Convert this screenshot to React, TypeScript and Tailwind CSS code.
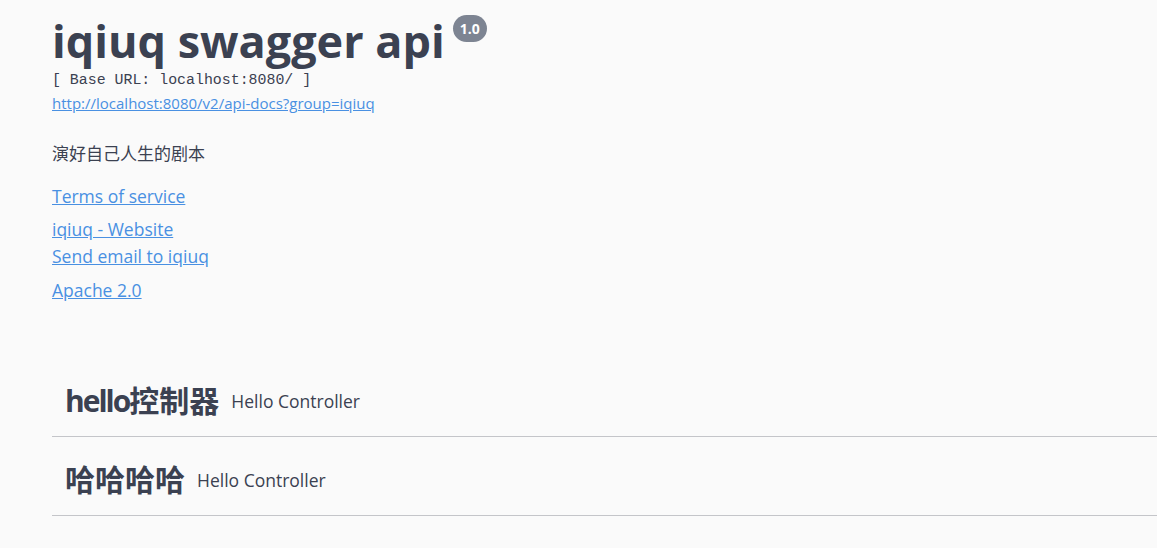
const sans = "font-['Open_Sans','Noto_Sans_CJK_SC',sans-serif]";

const links = [
  { label: "Terms of service", cls: "mt-[17px]" },
  { label: "iqiuq - Website", cls: "mt-[6px]" },
  { label: "Send email to iqiuq", cls: "mt-0" },
  { label: "Apache 2.0", cls: "mt-[7px]" },
];

const tags = [
  { latin: "hello", name: "控制器", desc: "Hello Controller" },
  { latin: "", name: "哈哈哈哈", desc: "Hello Controller" },
];

export default function App() {
  return (
    <div className={`min-h-[548px] w-full overflow-hidden bg-[#fafafa] pl-[52px] text-[#3b4151] ${sans}`}>
      <div className="pt-[10px]">
        <div className="flex items-start">
          <h2 className="text-[45px] font-bold leading-[61px] text-[#3b4151]">iqiuq swagger api</h2>
          <span className="ml-[8px] mt-[5px] rounded-full bg-[#7d8492] px-[7px] py-[4px] text-[14px] font-bold leading-[19px] text-white">
            1.0
          </span>
        </div>
        <div className="font-['Liberation_Mono',monospace] text-[14.9px] leading-[19px] text-[#3b4151]">
          [ Base URL: localhost:8080/ ]
        </div>
        <a className="mt-[3px] block text-[15px] leading-[21px] text-[#4990e2] underline" href="#">
          http://localhost:8080/v2/api-docs?group=iqiuq
        </a>
        <p className="mt-[28px] text-[17px] leading-[24px]">演好自己人生的剧本</p>
        <div className="flex flex-col items-start">
          {links.map((l) => (
            <a key={l.label} className={`${l.cls} text-[17.5px] leading-[27px] text-[#4990e2] underline`} href="#">
              {l.label}
            </a>
          ))}
        </div>
      </div>

      <div className="mt-[61px]">
        {tags.map((t) => (
          <div key={t.desc + t.name} className="mb-[7px] flex h-[72px] items-center border-b border-[#c4c5c9] pl-[13px]">
            <span className="text-[30px] font-bold leading-[40px]">
              {t.latin && <span className="tracking-[-2px]">{t.latin}</span>}
              {t.name}
            </span>
            <span className="ml-[12px] text-[17.5px] leading-[24px]">{t.desc}</span>
          </div>
        ))}
      </div>
    </div>
  );
}
